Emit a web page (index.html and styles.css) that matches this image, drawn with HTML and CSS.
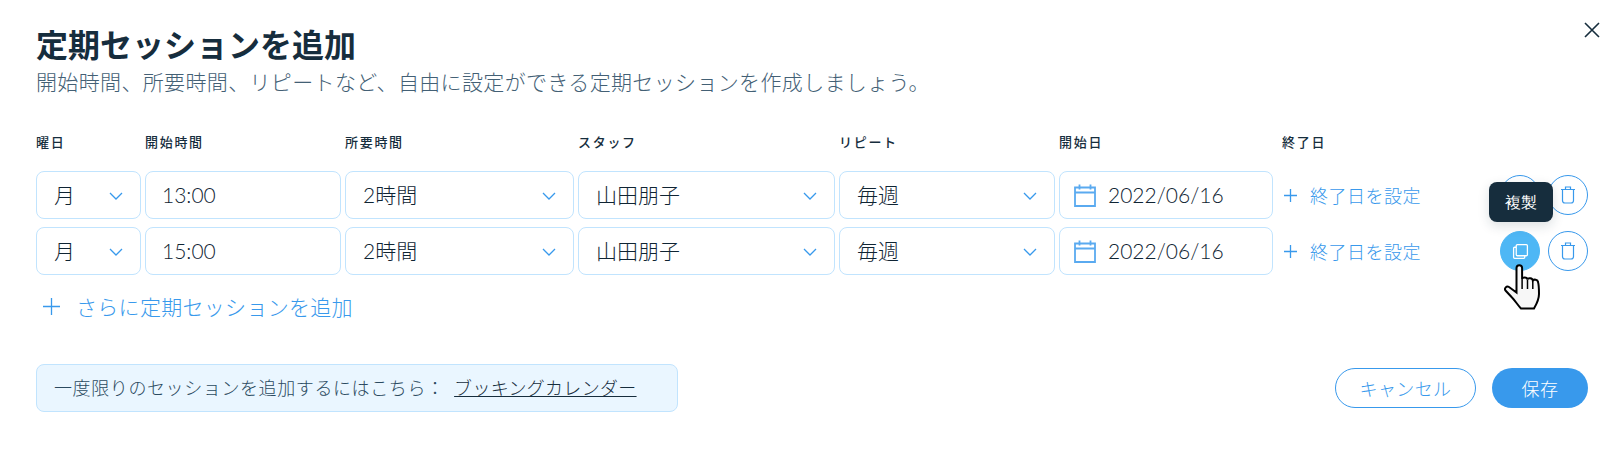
FILE: index.html
```html
<!DOCTYPE html>
<html lang="ja">
<head>
    <meta charset="UTF-8">
    <title>定期セッションを追加</title>
    <link rel="stylesheet" href="styles.css">
</head>
<body>
    <div class="dialog">
        <button class="close-btn" type="button" aria-label="閉じる">
            <svg width="18" height="18" viewBox="0 0 18 18"><path d="M2 2l14 14M16 2L2 16" stroke="#162d3d" stroke-width="1.6" fill="none"/></svg>
        </button>

        <h1 class="title">定期セッションを追加</h1>
        <p class="subtitle">開始時間、所要時間、リピートなど、自由に設定ができる定期セッションを作成しましょう。</p>

        <div class="session-grid">
            <span class="col-label">曜日</span>
            <span class="col-label">開始時間</span>
            <span class="col-label">所要時間</span>
            <span class="col-label">スタッフ</span>
            <span class="col-label">リピート</span>
            <span class="col-label">開始日</span>
            <span class="col-label end-label">終了日</span>

            <div class="field select"><span>月</span><svg class="chevron" width="14" height="8" viewBox="0 0 14 8"><path d="M1 1l6 6 6-6" /></svg></div>
            <div class="field time">13:00</div>
            <div class="field select"><span>2時間</span><svg class="chevron" width="14" height="8" viewBox="0 0 14 8"><path d="M1 1l6 6 6-6" /></svg></div>
            <div class="field select"><span>山田朋子</span><svg class="chevron" width="14" height="8" viewBox="0 0 14 8"><path d="M1 1l6 6 6-6" /></svg></div>
            <div class="field select"><span>毎週</span><svg class="chevron" width="14" height="8" viewBox="0 0 14 8"><path d="M1 1l6 6 6-6" /></svg></div>
            <div class="field date">
                <svg class="calendar" width="22" height="23" viewBox="0 0 22 23"><path d="M1 3.500h20v18.500H1zM1 8.500h20M5.500 .5v5M16.500 .5v5" /></svg>
                <span>2022/06/16</span>
            </div>
            <div class="end-cell">
                <a class="link end-link"><svg class="plus" width="13" height="13" viewBox="0 0 13 13"><path d="M6.500 0v13M0 6.500h13" /></svg>終了日を設定</a>
                <div class="actions">
                    <button class="round-btn" type="button">
                        <svg width="16" height="16" viewBox="0 0 16 16"><path d="M5 1.500h8.500a1 1 0 0 1 1 1V11a1 1 0 0 1-1 1H5a1 1 0 0 1-1-1V2.500a1 1 0 0 1 1-1zM4 4H2.500a1 1 0 0 0-1 1v8.500a1 1 0 0 0 1 1H11a1 1 0 0 0 1-1V12" /></svg>
                    </button>
                    <button class="round-btn" type="button">
                        <svg width="16" height="18" viewBox="0 0 16 18"><path d="M1 3.500h14M5.500 3.500V1h5v2.500M2.500 3.500v11a2.500 2.500 0 0 0 2.500 2.500h6a2.500 2.500 0 0 0 2.500-2.500v-11" /></svg>
                    </button>
                </div>
            </div>

            <div class="field select"><span>月</span><svg class="chevron" width="14" height="8" viewBox="0 0 14 8"><path d="M1 1l6 6 6-6" /></svg></div>
            <div class="field time">15:00</div>
            <div class="field select"><span>2時間</span><svg class="chevron" width="14" height="8" viewBox="0 0 14 8"><path d="M1 1l6 6 6-6" /></svg></div>
            <div class="field select"><span>山田朋子</span><svg class="chevron" width="14" height="8" viewBox="0 0 14 8"><path d="M1 1l6 6 6-6" /></svg></div>
            <div class="field select"><span>毎週</span><svg class="chevron" width="14" height="8" viewBox="0 0 14 8"><path d="M1 1l6 6 6-6" /></svg></div>
            <div class="field date">
                <svg class="calendar" width="22" height="23" viewBox="0 0 22 23"><path d="M1 3.500h20v18.500H1zM1 8.500h20M5.500 .5v5M16.500 .5v5" /></svg>
                <span>2022/06/16</span>
            </div>
            <div class="end-cell">
                <a class="link end-link"><svg class="plus" width="13" height="13" viewBox="0 0 13 13"><path d="M6.500 0v13M0 6.500h13" /></svg>終了日を設定</a>
                <div class="actions">
                    <button class="round-btn hovered" type="button">
                        <span class="tooltip">複製</span>
                        <svg width="17" height="17" viewBox="0 0 16 16"><path d="M5 1.500h8.500a1 1 0 0 1 1 1V11a1 1 0 0 1-1 1H5a1 1 0 0 1-1-1V2.500a1 1 0 0 1 1-1zM4 4H2.500a1 1 0 0 0-1 1v8.500a1 1 0 0 0 1 1H11a1 1 0 0 0 1-1V12" /></svg>
                        <svg class="cursor" width="37" height="46" viewBox="0 0 37 46">
                            <path class="hand" d="M12.500 4a2.800 2.800 0 0 1 5.600 0v11c0-2 5-2 5.400.5.500-2 5-1.500 5.300 1 1-1.500 5-1 5.200 1.500.8 2.500 1 7 1 12 0 6-3 11-5 14.500H17c-3-3-6-8-9-11L1.500 26.500c-1.500-2 1-5 3.500-3.500l7.500 5.500z" />
                            <path class="hand-line" d="M18.100 15v10M23.500 16v9M28.800 17v8" />
                        </svg>
                    </button>
                    <button class="round-btn" type="button">
                        <svg width="16" height="18" viewBox="0 0 16 18"><path d="M1 3.500h14M5.500 3.500V1h5v2.500M2.500 3.500v11a2.500 2.500 0 0 0 2.500 2.500h6a2.500 2.500 0 0 0 2.500-2.500v-11" /></svg>
                    </button>
                </div>
            </div>
        </div>

        <a class="link add-link"><svg class="plus" width="17" height="17" viewBox="0 0 17 17"><path d="M8.500 0v17M0 8.500h17" /></svg>さらに定期セッションを追加</a>

        <div class="footer">
            <div class="note">一度限りのセッションを追加するにはこちら： <a class="note-link">ブッキングカレンダー</a></div>
            <div class="footer-buttons">
                <button class="btn btn-cancel" type="button">キャンセル</button>
                <button class="btn btn-save" type="button">保存</button>
            </div>
        </div>
    </div>
</body>
</html>
```

FILE: styles.css
```css
* {
    box-sizing: border-box;
}

body {
    margin: 0;
    background-color: white;
    color: #162d3d;
    font-family: Lato, "Noto Sans CJK JP", sans-serif;
}

.dialog {
    position: relative;
    width: 1622px;
    height: 450px;
    padding: 25px 34px 0 36px;
    overflow: hidden;
}

.close-btn {
    position: absolute;
    top: 21px;
    right: 21px;
    padding: 0;
    border: none;
    background: none;
}

.title {
    margin: 0;
    font-size: 32px;
    line-height: 40px;
    font-weight: 700;
}

.subtitle {
    margin: 2px 0 0;
    font-size: 21px;
    font-weight: 300;
    line-height: 30px;
    letter-spacing: 0.35px;
    color: #436075;
}

.session-grid {
    display: grid;
    grid-template-columns: 105px 196px 229px 257px 216px 214px 1fr;
    column-gap: 4px;
    row-gap: 8px;
    margin-top: 37px;
}

.col-label {
    font-size: 13px;
    line-height: 16px;
    font-weight: 500;
    letter-spacing: 1.7px;
    margin-bottom: 13px;
}

.end-label {
    margin-left: 5px;
}

.field {
    display: flex;
    align-items: center;
    height: 48px;
    padding: 0 17px 2px;
    border: 1px solid #c1e4fe;
    border-radius: 8px;
    font-size: 21px;
    font-weight: 300;
    color: #0f2433;
}

.time {
    padding-left: 16px;
}

.select {
    justify-content: space-between;
}

.date {
    padding-left: 14px;
    gap: 12px;
}

.chevron {
    flex-shrink: 0;
    margin-top: 3px;
}

.chevron path {
    fill: none;
    stroke: #3899ec;
    stroke-width: 1.3;
}

.calendar {
    margin-top: 2px;
}

.calendar path {
    fill: none;
    stroke: #5aaaf0;
    stroke-width: 1.8;
}

.end-cell {
    display: flex;
    align-items: center;
    justify-content: space-between;
}

.link {
    display: flex;
    align-items: center;
    color: #3899ec;
    font-weight: 300;
}

.plus path {
    fill: none;
    stroke: #3899ec;
    stroke-width: 1.3;
}

.end-link {
    margin-left: 7px;
    gap: 13px;
    font-size: 18px;
    letter-spacing: 0.5px;
}

.actions {
    display: flex;
    gap: 8px;
}

.round-btn {
    position: relative;
    display: flex;
    align-items: center;
    justify-content: center;
    width: 40px;
    height: 40px;
    padding: 0;
    border: 1px solid #3899ec;
    border-radius: 50%;
    background-color: white;
}

.round-btn svg path {
    fill: none;
    stroke: #3899ec;
    stroke-width: 1.2;
}

.round-btn.hovered {
    border-color: #4eb7f5;
    background-color: #4eb7f5;
}

.round-btn.hovered svg path {
    stroke: white;
}

.tooltip {
    position: absolute;
    left: -12px;
    top: -50px;
    width: 64px;
    height: 40px;
    border-radius: 8px;
    background-color: #162d3d;
    box-shadow: 0 4px 12px rgba(22, 45, 61, 0.15);
    color: white;
    font-size: 16px;
    font-weight: 300;
    line-height: 42px;
    text-align: center;
}

.round-btn.hovered .cursor {
    position: absolute;
    left: 3px;
    top: 32px;
}

.round-btn.hovered .cursor .hand {
    fill: #f7f7f7;
    stroke: black;
    stroke-width: 2;
}

.round-btn.hovered .cursor .hand-line {
    fill: none;
    stroke: black;
    stroke-width: 1.5;
}

.add-link {
    margin-top: 16px;
    height: 30px;
    margin-left: 7px;
    gap: 16px;
    font-size: 21px;
    letter-spacing: 0.3px;
}

.footer {
    display: flex;
    align-items: center;
    justify-content: space-between;
    margin-top: 43px;
}

.note {
    width: 642px;
    height: 48px;
    padding-left: 17px;
    border: 1px solid #c1e4fe;
    border-radius: 8px;
    background-color: #eaf6ff;
    font-size: 18px;
    font-weight: 300;
    line-height: 46px;
    letter-spacing: 0.6px;
    color: #2b4a60;
}

.note-link {
    margin-left: 4px;
    color: #162d3d;
    letter-spacing: 0.3px;
    text-decoration: underline;
}

.footer-buttons {
    display: flex;
    gap: 16px;
}

.btn {
    height: 40px;
    border-radius: 20px;
    font-family: inherit;
    font-size: 18px;
    font-weight: 300;
    letter-spacing: 0.4px;
}

.btn-cancel {
    width: 141px;
    border: 1px solid #3899ec;
    background-color: white;
    color: #3899ec;
}

.btn-save {
    width: 96px;
    border: none;
    background-color: #3899ec;
    color: white;
}
```
